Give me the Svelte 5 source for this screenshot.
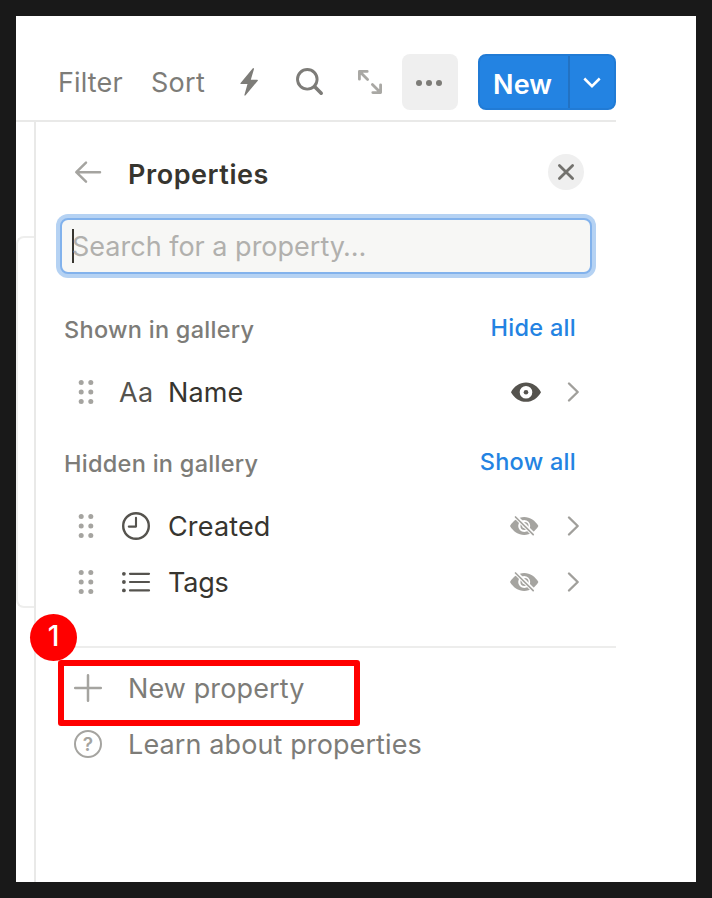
<script>
  const shown = [{ icon: 'text', label: 'Name', spacing: 0.15, visible: true }];
  const hidden = [
    { icon: 'clock', label: 'Created', spacing: 0.15, visible: false },
    { icon: 'list', label: 'Tags', spacing: -0.2, visible: false }
  ];
</script>

{#snippet row(item)}
  <div class="row">
    <svg class="grip" width="14" height="26" viewBox="0 0 14 26" fill="#a5a4a0">
      {#each [3.5, 13, 22.5] as y}
        <circle cx="2.2" cy={y} r="2.5" /><circle cx="11.8" cy={y} r="2.5" />
      {/each}
    </svg>
    <span class="kind">
      {#if item.icon === 'text'}
        <span class="aa">Aa</span>
      {:else if item.icon === 'clock'}
        <svg width="28" height="28" viewBox="0 0 28 28" fill="none" stroke="#55534e"><circle cx="14" cy="14" r="12.8" stroke-width="2.4" /><path d="M14 5.8V14.6H6.8" stroke-width="2.1" stroke-linecap="round" stroke-linejoin="round" /></svg>
      {:else}
        <svg width="28" height="22" viewBox="0 0 28 22" fill="#55534e" stroke="#55534e"><g stroke="none"><circle cx="1.9" cy="2.8" r="1.9" /><circle cx="1.9" cy="11" r="1.9" /><circle cx="1.9" cy="19.4" r="1.9" /></g><path d="M8 2.8H27M8 11H27M8 19.4H27" stroke-width="2.2" stroke-linecap="round" /></svg>
      {/if}
    </span>
    <span class="name" style="letter-spacing: {item.spacing}px">{item.label}</span>
    {#if item.visible}
      <svg class="eye" width="30" height="20" viewBox="0 0 30 20"><path fill="#55534e" fill-rule="evenodd" d="M0 10.2C3 4.6 8.6.6 15 .6S27 4.6 30 10.2C27 15.8 21.4 19.8 15 19.8S3 15.8 0 10.2ZM15 3.9A6.3 6.3 0 1 0 15 16.5A6.3 6.3 0 1 0 15 3.9Z" /><circle cx="15" cy="10.2" r="2.3" fill="#55534e" /></svg>
    {:else}
      <svg class="eye" width="30" height="20" viewBox="1 0 30 20"><path fill="#a5a4a0" fill-rule="evenodd" d="M0 10C3 4.8 8.3 1 14.2 1S25.4 4.8 28.4 10C25.4 15.2 20.1 19 14.2 19S3 15.2 0 10ZM14.2 4A6 6 0 1 0 14.2 16A6 6 0 1 0 14.2 4Z" /><circle cx="14.5" cy="10" r="3.2" fill="none" stroke="#a5a4a0" stroke-width="1.8" /><path d="M5.5 .5L23.5 18.5" stroke="#fff" stroke-width="4.2" /><path d="M5.5 1L23.2 18.7" stroke="#a5a4a0" stroke-width="1.7" stroke-linecap="round" /></svg>
    {/if}
    <svg class="chev" width="12" height="20" viewBox="0.5 0 12 20"><path d="M1.5 1.5L10.2 10L1.5 18.5" fill="none" stroke="#a09f9b" stroke-width="2.4" stroke-linecap="round" stroke-linejoin="round" /></svg>
  </div>
{/snippet}

<div class="frame">
  <div class="page">
    <header class="toolbar">
      <span class="tool filter">Filter</span>
      <span class="tool sort">Sort</span>
      <svg class="bolt" width="18" height="28" viewBox="0 0 18 28"><path d="M12.6.4L.4 15.2Q0 16 1 16H7.5L4.4 27Q4.6 28.2 5.6 27.3L17.8 12.7Q18.2 11.9 17.2 11.8H10.8L14 1Q13.8-.6 12.6.4Z" fill="#7d7c78" /></svg>
      <svg class="lens" width="28" height="28" viewBox="0 0 28 28" fill="none" stroke="#7d7c78"><circle cx="11.3" cy="11.3" r="9.8" stroke-width="2.9" /><path d="M18.5 18.5L25.2 25.2" stroke-width="3.6" stroke-linecap="round" /></svg>
      <svg class="expand" width="24" height="24" viewBox="0 0 24 24" fill="none" stroke="#a9a8a4" stroke-width="2.8" stroke-linecap="round" stroke-linejoin="round"><path d="M9.2 1.4H1.4V9.2M1.6 1.6L9.6 9.6M22.6 14.8V22.6H14.8M22.4 22.4L14.4 14.4" /></svg>
      <span class="more"><i></i><i></i><i></i></span>
      <span class="new"><b>New</b><span class="drop"><svg width="18" height="12" viewBox="0 0 18 12"><path d="M1.3 1.5L9 9.2L16.7 1.5" fill="none" stroke="#fff" stroke-width="2.5" /></svg></span></span>
    </header>
    <div class="body">
      <div class="gutter"><div class="card"></div></div>
      <section class="panel">
        <div class="head">
          <svg width="28" height="24" viewBox="0 0 28 24" fill="none" stroke="#a5a4a0" stroke-width="2.5" stroke-linecap="round" stroke-linejoin="round"><path d="M26 12.2H2.4M12 2.7L2.3 12.2L12 21.7" /></svg>
          <h1>Properties</h1>
          <span class="close"><svg width="18" height="18" viewBox="0 0 18 18"><path d="M2.4 2.4L15.6 15.6M15.6 2.4L2.4 15.6" stroke="#73726e" stroke-width="2.8" stroke-linecap="round" /></svg></span>
        </div>
        <div class="search"><span class="caret"></span><span>Search for a property…</span></div>
        <div class="label"><span>Shown in gallery</span><span class="link">Hide all</span></div>
        {#each shown as item}{@render row(item)}{/each}
        <div class="label second"><span>Hidden in gallery</span><span class="link">Show all</span></div>
        {#each hidden as item}{@render row(item)}{/each}
        <div class="rule"></div>
        <div class="action">
          <svg width="28" height="28" viewBox="0 0 28 28"><path d="M14 1.2V26.8M1.2 14H26.8" stroke="#a5a4a0" stroke-width="2.5" stroke-linecap="round" /></svg>
          <span>New property</span>
        </div>
        <div class="action">
          <span class="help">?</span>
          <span>Learn about properties</span>
        </div>
      </section>
    </div>
  </div>
  <div class="highlight"></div>
  <div class="badge">1</div>
</div>

<style>
  :global(body) { background: #191919; }
  .frame { position: relative; box-sizing: border-box; width: 712px; height: 898px; padding: 16px; background: #191919; font-family: Inter, "Liberation Sans", sans-serif; font-size: 27px; color: #37352f; overflow: hidden; white-space: nowrap; }
  .page { width: 680px; height: 866px; background: #fff; display: flex; flex-direction: column; }
  svg { display: block; flex: none; overflow: visible; }
  .toolbar { box-sizing: border-box; width: 600px; height: 106px; padding: 28px 0 0 42px; border-bottom: 2px solid #e9e9e8; display: flex; align-items: center; }
  .tool { color: #7d7c78; width: 93px; letter-spacing: .15px; }
  .sort { width: 88px; letter-spacing: .3px; }
  .bolt { margin-left: 1px; }
  .lens { margin-left: 38px; }
  .expand { margin-left: 34px; }
  .more { box-sizing: border-box; margin-left: 20px; width: 56px; height: 56px; padding: 2px 2px 0 0; border-radius: 8px; background: #efefef; display: flex; align-items: center; justify-content: center; gap: 4px; flex: none; }
  .more i { width: 6px; height: 6px; border-radius: 50%; background: #7d7c78; }
  .new { margin-left: 20px; box-sizing: border-box; width: 138px; height: 56px; background: #2383e2; border: 2px solid #217bd5; border-radius: 8px; color: #fff; display: flex; flex: none; align-items: center; }
  .new b { font-weight: 600; width: 75px; padding: 4px 0 0 13px; letter-spacing: .15px; }
  .drop { border-left: 2px solid #2272c3; height: 52px; flex: 1; display: flex; align-items: center; justify-content: center; padding-top: 2px; box-sizing: border-box; }
  .body { flex: 1; display: flex; }
  .gutter { width: 18px; padding-top: 114px; }
  .card { box-sizing: border-box; width: 18px; height: 372px; border: 2px solid #eeeeed; border-right: 0; border-radius: 8px 0 0 8px; }
  .panel { box-sizing: border-box; width: 582px; border-left: 2px solid #e9e9e8; }
  .head { box-sizing: border-box; height: 92px; padding: 8px 32px 0 38px; display: flex; align-items: center; }
  h1 { margin: 4px 0 0 26px; font-size: 27px; font-weight: 600; letter-spacing: .55px; }
  .close { margin-left: auto; width: 36px; height: 36px; border-radius: 50%; background: #efefef; display: flex; align-items: center; justify-content: center; }
  .search { box-sizing: border-box; margin: 4px 24px 0; height: 56px; border: 2px solid #82b2ec; border-radius: 8px; box-shadow: 0 0 0 4px #b5d2f3; background: #f7f7f5; display: flex; align-items: center; padding-left: 10px; color: #b1b0ad; }
  .caret { width: 2px; height: 34px; background: #37352f; margin-right: -2px; }
  .label { height: 48px; margin: 31px 0 11px; padding: 0 40px 0 28px; display: flex; align-items: center; justify-content: space-between; font-size: 23.5px; font-weight: 500; letter-spacing: .28px; color: #7d7c78; }
  .second { margin-top: 19px; }
  .link { color: #2383e2; margin-top: -4px; }
  .row { height: 56px; padding-left: 43px; display: flex; align-items: center; }
  .kind { width: 46px; margin-left: 29px; }
  .aa { color: #55534e; margin-left: -3px; letter-spacing: .3px; }
  .eye { margin-left: auto; }
  .chev { margin: 0 36px 0 27px; }
  .rule { height: 2px; background: #ededec; margin: 36px 0 12px; }
  .action { height: 56px; padding-left: 38px; display: flex; align-items: center; color: #7d7c78; gap: 26px; letter-spacing: .11px; }
  .help { box-sizing: border-box; width: 28px; height: 28px; border: 2.5px solid #a5a4a0; border-radius: 50%; font-size: 19px; font-weight: 600; color: #a5a4a0; display: flex; align-items: center; justify-content: center; }
  .highlight { position: absolute; box-sizing: border-box; left: 58px; top: 660px; width: 302px; height: 66px; border: 6px solid #f00; border-radius: 3px; }
  .badge { position: absolute; left: 30px; top: 614px; width: 47px; height: 47px; border-radius: 50%; background: #f00; color: #fff; font: 500 28px/44px Inter, sans-serif; text-align: center; }
</style>
